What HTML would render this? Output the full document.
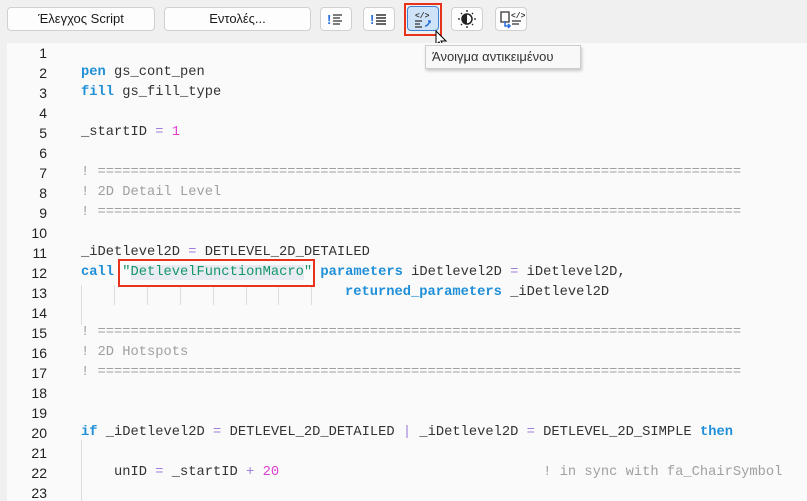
<!DOCTYPE html>
<html><head><meta charset="utf-8"><style>
body{margin:0;width:807px;height:501px;overflow:hidden;background:#f0f0f0;font-family:"Liberation Sans",sans-serif;position:relative}
.btn{position:absolute;top:7px;height:24px;background:#fdfdfd;border:1px solid #d0d0d0;border-radius:4px;box-sizing:border-box;font-size:13px;color:#1a1a1a;text-align:center;line-height:22px}
.ib{width:32px}
.ed{position:absolute;left:7px;top:43px;width:800px;height:458px;background:#fafafa}
.ln{position:absolute;left:0;width:40px;text-align:right;font:14px "Liberation Sans",sans-serif;color:#222}
.cd{position:absolute;left:74px;font:13.75px "Liberation Mono",monospace;color:#333;white-space:pre}
.k{color:#1f8fd8;font-weight:bold}.o{color:#a07ed8}.n{color:#e040d0}.c{color:#a0a0a0}.s{color:#15966a}
.g{position:absolute;width:1px;background:#ddd;height:20px}
</style></head><body>
<div class="btn" style="left:7px;width:148px">Έλεγχος Script</div>
<div class="btn" style="left:164px;width:147px">Εντολές...</div>
<div class="btn ib" style="left:320px"><svg width="30" height="22"><text x="6" y="16" font-size="13" font-weight="bold" fill="#2a6fdb" font-family="Liberation Sans">!</text><path d="M12 7h9M12 10h7M12 13h9M12 16h7" stroke="#555" stroke-width="1.5"/></svg></div>
<div class="btn ib" style="left:363px"><svg width="30" height="22"><text x="6" y="16" font-size="13" font-weight="bold" fill="#2a6fdb" font-family="Liberation Sans">!</text><path d="M12 7h10M12 10h10M12 13h10M12 16h10" stroke="#333" stroke-width="1.5"/></svg></div>
<div style="position:absolute;left:404px;top:3px;width:38px;height:33px;border:2px solid #e8321c;box-sizing:border-box"></div>
<div class="btn ib" style="left:407px;background:#cfe3f8;border-color:#3b82d6;height:25px;top:6px"><svg width="30" height="22"><text x="7" y="11" font-size="8" font-weight="bold" fill="#333" font-family="Liberation Mono">&lt;/&gt;</text><path d="M7 14h7M7 17h5M7 20h7" stroke="#333" stroke-width="1.3"/><path d="M17 19q3 0 5-5M20 14h2v2" stroke="#2a6fdb" stroke-width="1.6" fill="none"/></svg></div>
<div class="btn ib" style="left:451px"><svg width="30" height="22"><circle cx="15" cy="11" r="5" fill="none" stroke="#222" stroke-width="1.5"/><path d="M15 6a5 5 0 0 0 0 10z" fill="#222"/><path d="M15 2v2M15 18v2M8 11h-2M22 11h2M10 6l-1-1M20 6l1-1M10 16l-1 1M20 16l1 1" stroke="#222" stroke-width="1.3"/></svg></div>
<div class="btn ib" style="left:495px"><svg width="30" height="22"><path d="M5 4h8v10h-8z" fill="none" stroke="#333" stroke-width="1.3"/><path d="M9 13v5h5M12 16l2 2-2 2" stroke="#2a6fdb" stroke-width="1.5" fill="none"/><text x="15" y="10" font-size="8" font-weight="bold" fill="#333" font-family="Liberation Mono">&lt;/&gt;</text><path d="M16 13h9M16 16h7" stroke="#333" stroke-width="1.3"/></svg></div>
<svg style="position:absolute;left:434px;top:30px" width="16" height="20"><path d="M2 1v14l3-3 3 6 2-1-3-6h5z" fill="#fff" stroke="#000" stroke-width="1"/></svg>
<div class="ed">
<div class="ln" style="top:2px">1</div>
<div class="ln" style="top:22px">2</div><div class="cd" style="top:22px"><span class="k">pen</span> gs_cont_pen</div>
<div class="ln" style="top:42px">3</div><div class="cd" style="top:42px"><span class="k">fill</span> gs_fill_type</div>
<div class="ln" style="top:62px">4</div>
<div class="ln" style="top:82px">5</div><div class="cd" style="top:82px">_startID <span class="o">=</span> <span class="n">1</span></div>
<div class="ln" style="top:102px">6</div>
<div class="ln" style="top:122px">7</div><div class="cd c" style="top:122px">! ==============================================================================</div>
<div class="ln" style="top:142px">8</div><div class="cd c" style="top:142px">! 2D Detail Level</div>
<div class="ln" style="top:162px">9</div><div class="cd c" style="top:162px">! ==============================================================================</div>
<div class="ln" style="top:182px">10</div>
<div class="ln" style="top:202px">11</div><div class="cd" style="top:202px">_iDetlevel2D <span class="o">=</span> DETLEVEL_2D_DETAILED</div>
<div class="ln" style="top:222px">12</div><div class="cd" style="top:222px"><span class="k">call</span> <span class="s">"<span style="background:#e8ecf2">DetlevelFunctionMacro</span>"</span> <span class="k">parameters</span> iDetlevel2D <span class="o">=</span> iDetlevel2D,</div>
<div class="ln" style="top:242px">13</div><div class="cd" style="top:242px">                                <span class="k">returned_parameters</span> _iDetlevel2D</div>
<div class="g" style="left:74px;top:242px"></div><div class="g" style="left:107px;top:242px"></div><div class="g" style="left:140px;top:242px"></div><div class="g" style="left:173px;top:242px"></div><div class="g" style="left:206px;top:242px"></div><div class="g" style="left:239px;top:242px"></div><div class="g" style="left:271px;top:242px"></div><div class="g" style="left:304px;top:242px"></div>
<div class="ln" style="top:262px">14</div><div class="g" style="left:74px;top:262px"></div>
<div class="ln" style="top:282px">15</div><div class="cd c" style="top:282px">! ==============================================================================</div>
<div class="ln" style="top:302px">16</div><div class="cd c" style="top:302px">! 2D Hotspots</div>
<div class="ln" style="top:322px">17</div><div class="cd c" style="top:322px">! ==============================================================================</div>
<div class="ln" style="top:342px">18</div>
<div class="ln" style="top:362px">19</div>
<div class="ln" style="top:382px">20</div><div class="cd" style="top:382px"><span class="k">if</span> _iDetlevel2D <span class="o">=</span> DETLEVEL_2D_DETAILED <span class="o">|</span> _iDetlevel2D <span class="o">=</span> DETLEVEL_2D_SIMPLE <span class="k">then</span></div>
<div class="ln" style="top:402px">21</div><div class="g" style="left:74px;top:397px;height:61px"></div>
<div class="ln" style="top:422px">22</div><div class="cd" style="top:422px">    unID <span class="o">=</span> _startID <span class="o">+</span> <span class="n">20</span>                                <span class="c">! in sync with fa_ChairSymbol</span></div>
<div class="ln" style="top:442px">23</div>
</div>
<div style="position:absolute;left:118px;top:259px;width:197px;height:28px;border:2.5px solid #e8321c;box-sizing:border-box"></div>
<div style="position:absolute;left:425px;top:45px;width:156px;height:24px;background:#f8f8f8;border:1px solid #ccc;box-shadow:1px 2px 3px rgba(0,0,0,.2);font-size:13px;color:#333;line-height:22px;padding-left:6px;box-sizing:border-box">Άνοιγμα αντικειμένου</div>
</body></html>
